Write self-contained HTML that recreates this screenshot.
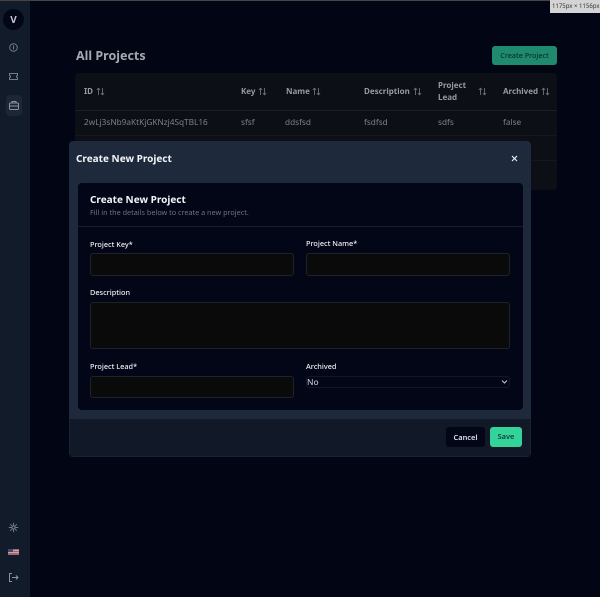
<!DOCTYPE html>
<html><head><meta charset="utf-8"><style>
html,body{margin:0;padding:0;width:600px;height:597px;overflow:hidden;background:#010514}
*{box-sizing:border-box}
body{font-family:"Noto Sans","DejaVu Sans","Liberation Sans",sans-serif;position:relative}
.a{position:absolute;white-space:nowrap;line-height:1}
.b{position:absolute}
.th{color:#959ba6;font-size:8px;font-weight:700}
.td{color:#7c8188;font-size:8.250px}
.l{color:#f1f3f6;font-size:7.300px;font-weight:500}
.i{position:absolute;background:#0a0a0b;border:1px solid #1f2229;border-radius:3px}
.s{position:absolute;width:9px;height:9px;fill:none;stroke:#6b727d;stroke-width:.9}
</style></head><body>
<svg width="0" height="0" style="position:absolute"><symbol id="so" viewBox="0 0 9 9"><path d="M2.500 8V1.200M.9 2.800l1.600-1.600 1.600 1.600M6.500 1v6.800M4.900 6.200l1.600 1.600 1.600-1.600"/></symbol></svg>
<div class="b" style="left:0;top:0;width:600px;height:1px;background:#454545"></div>
<div class="b" style="left:0;top:1px;width:30px;height:596px;background:#111b2a"></div>
<div class="b" style="left:3px;top:9px;width:21px;height:21px;border-radius:50%;background:#020617"></div>
<div class="a" style="left:3px;top:9px;width:21px;text-align:center;line-height:21px;color:#c2c7cf;font-size:10px;font-weight:700">V</div>
<svg class="b" style="left:8px;top:42px" width="11" height="11" viewBox="0 0 11 11" fill="none" stroke="#747c88"><circle cx="5.500" cy="5.500" r="3.800"/><path d="M5.500 3.500v4"/></svg>
<svg class="b" style="left:8px;top:71px" width="11" height="11" viewBox="0 0 11 11" fill="none" stroke="#747c88"><path d="M1.500 2.500h8v2a1 1 0 0 0 0 2v2h-8v-2a1 1 0 0 0 0-2z"/></svg>
<div class="b" style="left:6px;top:95px;width:16px;height:21px;background:#1c2636;border-radius:4px"></div>
<svg class="b" style="left:8px;top:100px" width="12" height="11" viewBox="0 0 12 11" fill="none" stroke="#8b93a0"><rect x="1.500" y="3" width="9" height="6.500" rx="1"/><path d="M4 3V1.500h4V3M1.500 6h9"/></svg>
<svg class="b" style="left:8px;top:522px" width="11" height="11" viewBox="0 0 11 11" fill="none" stroke="#747c88" stroke-width=".9"><circle cx="5.500" cy="5.500" r="1.500"/><path d="M5.500 .8v3M5.500 7.200v3M.8 5.500h3M7.200 5.500h3M2.200 2.200l2 2M6.800 6.800l2 2M8.800 2.200l-2 2M4.200 6.800l-2 2"/></svg>
<svg class="b" style="left:8px;top:549px" width="11" height="6" viewBox="0 0 11 6"><rect width="11" height="6" fill="#a8656f"/><path d="M0 1.500h11M0 3.500h11" stroke="#c9bcc2" stroke-width=".7"/><rect width="5" height="3" fill="#3d4a78"/></svg>
<svg class="b" style="left:8px;top:572px" width="11" height="11" viewBox="0 0 11 11" fill="none" stroke="#8b93a0"><path d="M4 1.500H1.500v8H4M4 5.500h6M8 3.500l2 2-2 2"/></svg>

<div class="a" style="left:76px;top:50px;color:#a3a8b0;font-size:12.500px;font-weight:700">All Projects</div>
<div class="b" style="left:492px;top:46px;width:65px;height:19px;background:#1f8a6d;border-radius:3px"></div>
<div class="a" style="left:492px;top:47px;width:65px;text-align:center;line-height:19px;color:#06322b;font-size:7.200px;font-weight:500">Create Project</div>

<div class="b" style="left:75px;top:73px;width:482px;height:117px;background:#0c0f16;border-radius:4px"></div>
<div class="b" style="left:75px;top:110px;width:482px;height:1px;background:#1a1e26"></div>
<div class="b" style="left:75px;top:135px;width:482px;height:1px;background:#14171e"></div>
<div class="b" style="left:75px;top:160px;width:482px;height:1px;background:#14171e"></div>
<div class="a th" style="left:84px;top:88px">ID</div><svg class="s" style="left:96px;top:87px"><use href="#so"/></svg>
<div class="a th" style="left:241px;top:88px">Key</div><svg class="s" style="left:258px;top:87px"><use href="#so"/></svg>
<div class="a th" style="left:286px;top:88px">Name</div><svg class="s" style="left:312px;top:87px"><use href="#so"/></svg>
<div class="a th" style="left:364px;top:88px">Description</div><svg class="s" style="left:413px;top:87px"><use href="#so"/></svg>
<div class="a th" style="left:438px;top:82px">Project</div><div class="a th" style="left:438px;top:94px">Lead</div><svg class="s" style="left:478px;top:87px"><use href="#so"/></svg>
<div class="a th" style="left:503px;top:88px">Archived</div><svg class="s" style="left:541px;top:87px"><use href="#so"/></svg>
<div class="a td" style="left:84px;top:119px">2wLj3sNb9aKtKjGKNzj4SqTBL16</div>
<div class="a td" style="left:241px;top:119px">sfsf</div>
<div class="a td" style="left:285px;top:119px">ddsfsd</div>
<div class="a td" style="left:364px;top:119px">fsdfsd</div>
<div class="a td" style="left:438px;top:119px">sdfs</div>
<div class="a td" style="left:503px;top:119px">false</div>

<div class="b" style="left:550px;top:0;width:50px;height:13px;background:#d4d4d4"></div>
<div class="a" style="left:552px;top:3px;color:#333;font-size:6px">1175px × 1156px</div>

<div class="b" style="left:69px;top:141px;width:462px;height:316px;background:#1e293b;border-radius:4px;overflow:hidden">
<div class="b" style="left:0;top:278px;width:462px;height:38px;background:#111827;border:1px solid #1a2331;border-top:0"></div>
</div>
<div class="a" style="left:76px;top:153px;color:#f3f5f8;font-size:10px;font-weight:700">Create New Project</div>
<svg class="b" style="left:511px;top:155px" width="7" height="7" viewBox="0 0 7 7" fill="none" stroke="#f3f5f8" stroke-width="1.100"><path d="M1 1l5 5M6 1L1 6"/></svg>

<div class="b" style="left:78px;top:183px;width:445px;height:227px;background:#020617;border-radius:4px"></div>
<div class="b" style="left:78px;top:226px;width:445px;height:1px;background:#161c29"></div>
<div class="a" style="left:90px;top:194px;color:#f3f5f8;font-size:10px;font-weight:700">Create New Project</div>
<div class="a" style="left:90px;top:210px;color:#697384;font-size:7.250px">Fill in the details below to create a new project.</div>

<div class="a l" style="left:90px;top:242px">Project Key*</div>
<div class="i" style="left:90px;top:253px;width:204px;height:23px"></div>
<div class="a l" style="left:306px;top:241px">Project Name*</div>
<div class="i" style="left:306px;top:253px;width:204px;height:23px"></div>
<div class="a l" style="left:90px;top:290px">Description</div>
<div class="i" style="left:90px;top:302px;width:420px;height:47px"></div>
<div class="a l" style="left:90px;top:364px">Project Lead*</div>
<div class="i" style="left:90px;top:376px;width:204px;height:22px"></div>
<div class="a l" style="left:306px;top:364px">Archived</div>
<div class="b" style="left:306px;top:376px;width:204px;height:12px;border:1px solid #11172a;border-radius:3px"></div>
<div class="a" style="left:307px;top:379px;color:#d5d8de;font-size:8.500px">No</div>
<svg class="b" style="left:501px;top:379px" width="7" height="6" viewBox="0 0 7 6" fill="none" stroke="#c8ccd3"><path d="M1 1.500l2.500 2.500L6 1.500"/></svg>

<div class="b" style="left:446px;top:427px;width:39px;height:20px;background:#020617;border-radius:3px"></div>
<div class="a" style="left:446px;top:428px;width:39px;text-align:center;line-height:20px;color:#dfe3ea;font-size:7.400px;font-weight:600">Cancel</div>
<div class="b" style="left:490px;top:427px;width:32px;height:20px;background:#34d399;border-radius:3px"></div>
<div class="a" style="left:490px;top:427px;width:32px;text-align:center;line-height:20px;color:#0a4439;font-size:7.400px;font-weight:600">Save</div>
</body></html>
